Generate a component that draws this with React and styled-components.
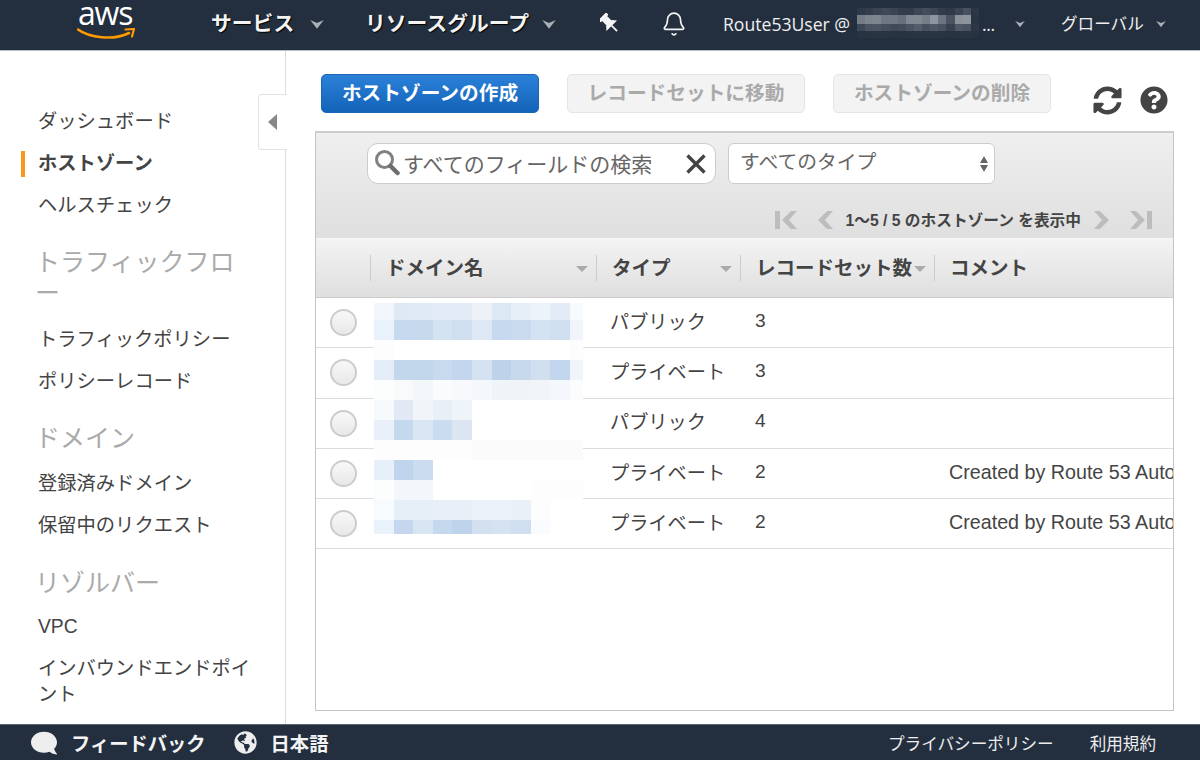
import React from 'react'
import styled, { createGlobalStyle } from 'styled-components'
import { Bell } from 'lucide-react'
import { FaSyncAlt, FaQuestionCircle, FaComment, FaGlobeAmericas } from 'react-icons/fa'

const Global = createGlobalStyle`
  html, body { margin: 0; padding: 0; }
  body { font-family: "Liberation Sans", "Noto Sans CJK JP", sans-serif; background: #fff; color: #444; }
  * { box-sizing: border-box; }
`

const Page = styled.div`
  width: 1200px;
  height: 760px;
  display: flex;
  flex-direction: column;
  overflow: hidden;
`

/* top bar */
const TopBar = styled.header`
  height: 51px;
  flex: none;
  display: flex;
  align-items: center;
  background: #232f3e;
  border-bottom: 1px solid #b9bec4;
  color: #fff;
  padding-bottom: 3px;
`
const Logo = styled.div`
  width: 134px;
  margin-left: 77px;
  flex: none;
  position: relative;
  height: 44px;
`
const LogoText = styled.span`
  position: absolute;
  left: 1px;
  top: -1px;
  font: 400 32px/24px "Open Sans", sans-serif;
  letter-spacing: -1.2px;
  color: #fff;
`
const LogoSmile = styled.svg`
  position: absolute;
  left: 0;
  top: 26px;
`
const NavLabel = styled.span`
  flex: none;
  width: ${p => p.$w}px;
  margin-bottom: 4px;
  font-size: 20.8px;
  font-weight: 700;
  color: #f4f4f4;
  text-shadow: 1px 1px 1px #000;
  white-space: nowrap;
`
const Caret = styled.svg`
  flex: none;
  margin-left: ${p => p.$ml}px;
  margin-right: ${p => p.$mr}px;
  margin-top: 2px;
  fill: #aab0b7;
`
const PinSlot = styled.span`
  flex: none;
  width: 61px;
  margin-left: -3px;
  display: flex;
  color: #f5f5f5;
`
const BellSlot = styled.span`
  flex: none;
  width: 62px;
  display: flex;
  color: #f5f5f5;
`
const UserLabel = styled.span`
  flex: none;
  width: 292px;
  position: relative;
  font: 400 17.6px "Open Sans", "Noto Sans CJK JP", sans-serif;
  color: #f0f0f0;
  white-space: nowrap;
`
const UserDots = styled.span`
  position: absolute;
  left: 259px;
  top: 0;
  letter-spacing: -0.4px;
`
const GlobalLabel = styled.span`
  flex: none;
  width: 95px;
  margin-bottom: 2px;
  font-size: 16.6px;
  color: #f0f0f0;
  white-space: nowrap;
`

/* pixelated masks */
const Mosaic = styled.div`
  position: absolute;
  left: ${p => p.$x}px;
  top: ${p => p.$y}px;
  display: grid;
  grid-template-columns: ${p => p.$cols};
  grid-template-rows: ${p => p.$rows};
`
const MosaicCell = styled.span`
  background: ${p => p.$c};
`

/* body */
const Body = styled.div`
  flex: 1;
  min-height: 0;
  display: flex;
  position: relative;
`
const Sidebar = styled.nav`
  width: 286px;
  flex: none;
  border-right: 1px solid #ddd;
  padding-top: 58px;
  overflow: hidden;
`
const NavItem = styled.div`
  margin: 0 0 ${p => p.$mb ?? 16}px 21px;
  padding-left: 13px;
  border-left: 4px solid ${p => (p.$active ? '#f7981d' : 'transparent')};
  font-size: 19.3px;
  line-height: 26px;
  font-weight: ${p => (p.$active ? 700 : 400)};
  color: #444;
`
const NavHeading = styled.div`
  margin: ${p => p.$mt}px 0 ${p => p.$mb}px 35px;
  font-size: 25px;
  line-height: 31px;
  color: #aaa;
`
const CollapseTab = styled.div`
  position: absolute;
  left: 258px;
  top: 43px;
  width: 29px;
  height: 56px;
  background: #fff;
  border: 1px solid #e2e2e2;
  border-right: none;
  border-radius: 4px 0 0 4px;
  display: flex;
  align-items: center;
  justify-content: center;
  padding-right: 2px;
  &::after {
    content: '';
    border-top: 8px solid transparent;
    border-bottom: 8px solid transparent;
    border-right: 9px solid #888;
  }
`
const Main = styled.main`
  flex: 1;
  min-width: 0;
  padding: 23px 26px 13px 29px;
  display: flex;
  flex-direction: column;
`
const ButtonRow = styled.div`
  display: flex;
  align-items: center;
  height: 39px;
  margin-left: 6px;
  margin-bottom: 18px;
`
const ActionButton = styled.button`
  flex: none;
  width: ${p => p.$w}px;
  height: 39px;
  margin-right: 28px;
  padding: 0 0 4px;
  border-radius: 5px;
  font: 700 19.7px "Liberation Sans", "Noto Sans CJK JP", sans-serif;
  border: 1px solid ${p => (p.$primary ? '#1a66b5' : '#e4e4e4')};
  color: ${p => (p.$primary ? '#fff' : '#aaa')};
  background: ${p => (p.$primary ? 'linear-gradient(#2b80d8, #1264b8)' : '#f3f3f3')};
`
const ToolIcons = styled.div`
  display: flex;
  align-items: center;
  gap: 18px;
  margin-left: 14px;
  margin-top: 13px;
  color: #444;
`

/* table panel */
const Panel = styled.section`
  flex: 1;
  min-height: 0;
  position: relative;
  border: 1px solid #c4c4c4;
  border-top: 2px solid #ccc;
  overflow: hidden;
  background: #fff;
`
const Toolbar = styled.div`
  height: 106px;
  background: linear-gradient(#efefef, #dfdfdf);
  border-bottom: 1px solid #f8f8f8;
  padding: 10px 0 0 51px;
`
const Filters = styled.div`
  display: flex;
  gap: 12px;
`
const SearchBox = styled.div`
  width: 349px;
  height: 41px;
  border: 1px solid #ccc;
  border-radius: 11px;
  background: #fff;
  display: flex;
  align-items: center;
  padding: 0 8px 0 6px;
  font-size: 21px;
  color: #666;
`
const SearchGlyph = styled.svg`
  flex: none;
  margin-top: -2px;
`
const SearchText = styled.span`
  flex: 1;
  margin-left: 3px;
  padding-bottom: 2px;
  white-space: nowrap;
`
const SelectBox = styled.div`
  width: 267px;
  height: 41px;
  border: 1px solid #ccc;
  border-radius: 6px;
  background: #fff;
  display: flex;
  align-items: center;
  justify-content: space-between;
  padding: 0 6px 7px 11px;
  font-size: 19.8px;
  color: #666;
`
const SelectArrows = styled.span`
  display: flex;
  flex-direction: column;
  gap: 2px;
  margin-top: 7px;
  &::before, &::after {
    content: '';
    width: 0;
    border-left: 4px solid transparent;
    border-right: 4px solid transparent;
  }
  &::before { border-bottom: 7px solid #666; }
  &::after { border-top: 7px solid #666; }
`
const Pager = styled.div`
  display: flex;
  align-items: center;
  justify-content: flex-end;
  margin-top: 24px;
  padding-right: 21px;
  gap: 13px;
  font-size: 15.7px;
  font-weight: 700;
  color: #444;
  white-space: nowrap;
`
const PagerGroup = styled.span`
  display: flex;
  align-items: center;
  gap: 21px;
`
const PagerGlyph = styled.svg`
  flex: none;
  fill: #bdbdbd;
  transform: ${p => (p.$flip ? 'scaleX(-1)' : 'none')};
`
const HeadRow = styled.div`
  height: 59px;
  display: grid;
  grid-template-columns: 54px 226px 144px 194px 1fr;
  align-items: center;
  background: linear-gradient(#f3f3f3, #dfdfdf);
  border-bottom: 1px solid #ccc;
`
const HeadCell = styled.div`
  position: relative;
  height: 26px;
  padding-left: 15px;
  font-size: 19.5px;
  line-height: 26px;
  font-weight: 700;
  color: #444;
  border-left: 1px solid #ccc;
  white-space: nowrap;
  &::after {
    content: ${p => (p.$sort ? "''" : 'none')};
    position: absolute;
    right: 8px;
    top: 11px;
    border-left: 6px solid transparent;
    border-right: 6px solid transparent;
    border-top: 6px solid #aaa;
  }
`
const Row = styled.div`
  height: 50.3px;
  display: grid;
  grid-template-columns: 54px 226px 144px 194px 1fr;
  align-items: center;
  border-bottom: 1px solid #ddd;
  font-size: 19.2px;
  color: #444;
  white-space: nowrap;
`
const RadioCell = styled.div`
  display: flex;
  padding-left: 14px;
`
const Radio = styled.span`
  width: 27px;
  height: 27px;
  border-radius: 50%;
  border: 2px solid #ccc;
  background: linear-gradient(#f8f8f8, #e8e8e8);
`
const Cell = styled.div`
  padding-left: ${p => p.$pl}px;
  padding-bottom: 4px;
  overflow: hidden;
`
const CommentCell = styled(Cell)`
  font-size: 19.7px;
  padding-bottom: 2px;
`

/* footer */
const Footer = styled.footer`
  height: 36px;
  flex: none;
  display: flex;
  align-items: center;
  background: #232f3e;
  border-top: 1px solid #5b6570;
  color: #fff;
  padding-right: 44px;
`
const FootStrong = styled.span`
  font-size: 19.3px;
  font-weight: 700;
  margin-left: ${p => p.$ml}px;
  color: #f4f4f4;
`
const FootIcon = styled.span`
  display: flex;
  margin-left: ${p => p.$ml}px;
  color: #eee;
  transform: ${p => (p.$flip ? 'scaleX(-1)' : 'none')};
`
const FootLink = styled.span`
  font-size: 16.6px;
  color: #eee;
  margin-left: ${p => p.$ml};
`

const userMask = [
  ['#2f3a49', '#333e4d', '#3a4553', '#3f4a58', '#3a4553', '#333e4d', '#323d4c', '#3c4755', '#434d5b', '#3c4755', '#323d4c', '#2f3a49', '#3a4553', '#48525f', '#2c3746'],
  ['#747c87', '#7b838d', '#7d858f', '#6d7681', '#6f7782', '#666f7b', '#7f8791', '#80888f', '#757d88', '#8f959e', '#6a737f', '#4a5461', '#8a9199', '#8d949c', '#2a3543'],
  ['#3c4755', '#4a5461', '#4c5663', '#444e5c', '#3f4a58', '#414c59', '#4a5461', '#545d69', '#46505e', '#4e5865', '#48525f', '#36414f', '#4e5865', '#4a5461', '#2c3746'],
  ['#283341', '#293442', '#2a3543', '#293442', '#283341', '#283341', '#293442', '#2a3543', '#293442', '#2a3543', '#293442', '#283341', '#293442', '#2a3543', '#283341']
]

const W = '#ffffff'
const rowMask = [
  ['#f2f6fb', '#dfe9f4', '#e0eaf5', '#e3ecf6', '#e2ebf6', '#edf2f9', '#dce8f4', '#e6eff7', '#edf3fa', '#e2ebf6', '#f8fbfe'],
  ['#e9f1fa', '#c6d9ee', '#c7daed', '#d4e3f2', '#cfdfef', '#dde8f4', '#c7d9ee', '#cbdbef', '#d4e2f2', '#cfdfef', '#f1f5fb'],
  ['#fdfdfd', W, W, W, W, W, W, W, W, W, '#fdfdfd'],
  ['#e3ecf7', '#c2d6ec', '#c2d6ec', '#c8daee', '#c3d6ed', '#d4e2f1', '#bcd3ea', '#c7d9ed', '#d1dfee', '#c2d7ed', '#f0f5fb'],
  ['#fcfdfd', '#f9fafc', '#f4f7fa', '#fafbfd', '#f7f9fc', '#f4f7fb', '#eff4f9', '#f0f4f9', '#f1f5fa', '#f4f7fb', '#fbfcfd'],
  ['#f7fafd', '#e3e9f4', '#f1f5f9', '#e9eff6', '#eff3fa', W, W, W, W, W, W],
  ['#e9f0f9', '#c4d8ee', '#d9e6f3', '#c9dcf0', '#dbe6f2', W, W, W, W, W, W],
  ['#fdfdfd', '#fdfdfd', '#fdfdfd', '#fdfdfd', '#fdfdfd', '#fbfbfb', '#fbfbfb', '#fbfbfb', '#fbfbfb', '#fbfbfb', '#fbfbfb'],
  ['#e7f0f9', '#bed5ec', '#cbdcef', W, W, W, W, W, W, W, W],
  ['#fcfdfd', '#f3f6fb', '#f3f7fb', W, W, W, W, W, '#fdfdfd', '#fdfdfd', '#fdfdfd'],
  ['#f8fbfe', '#e6eef7', '#e6eef7', '#e8eff8', '#e8eff8', '#ebf1f9', '#ebf1f9', '#e9f0f8', '#fdfdfe', W, W],
  ['#e9f1fa', '#c4d7ee', '#d8e5f3', '#c5d8ee', '#bed3ec', '#d2e0f0', '#d4e2f2', '#cfdff0', '#fafbfe', W, W]
]

const zones = [
  { type: 'パブリック', count: 3, comment: '' },
  { type: 'プライベート', count: 3, comment: '' },
  { type: 'パブリック', count: 4, comment: '' },
  { type: 'プライベート', count: 2, comment: 'Created by Route 53 Auto Naming' },
  { type: 'プライベート', count: 2, comment: 'Created by Route 53 Auto Naming' }
]

const PinIcon = () => (
  <svg width="20" height="22" viewBox="0 0 20 22" fill="currentColor">
    <g transform="rotate(-45 10 11)">
      <rect x="4.5" y="0" width="11" height="3.4" rx="1" />
      <rect x="6.5" y="3" width="7" height="7" />
      <path d="M6 9.5h8l3.5 4h-15z" />
      <rect x="9.1" y="13" width="1.8" height="8" />
    </g>
  </svg>
)

const NavCaret = ({ ml, mr, size = 14 }) => (
  <Caret $ml={ml} $mr={mr} width={size} height={size * 0.62} viewBox="0 0 14 9">
    <path d="M0 0l7 3 7-3-7 9z" />
  </Caret>
)

const SearchIcon = () => (
  <SearchGlyph width="26" height="28" viewBox="0 0 26 28" fill="none">
    <circle cx="10.5" cy="10.5" r="8" stroke="#808080" strokeWidth="3" />
    <path d="M16.5 17l7 7" stroke="#6e6e6e" strokeWidth="4.5" strokeLinecap="round" />
  </SearchGlyph>
)

const ClearIcon = () => (
  <svg width="22" height="22" viewBox="0 0 22 22" fill="none">
    <path d="M2.5 2.5l17 17M19.5 2.5l-17 17" stroke="#444" strokeWidth="3.4" />
  </svg>
)

const PagerIcon = ({ flip, bar }) => (
  <PagerGlyph $flip={flip} width={bar ? 22 : 15} height="20" viewBox={bar ? '0 0 22 20' : '7 0 15 20'}>
    {bar && <rect x="0" y="1" width="5" height="18" />}
    <path d="M16 1h6l-8 9 8 9h-6l-9-9z" />
  </PagerGlyph>
)

export default function App() {
  return (
    <Page>
      <Global />
      <TopBar>
        <Logo>
          <LogoText>aws</LogoText>
          <LogoSmile width="58" height="13" viewBox="0 0 58 13" fill="none">
            <path d="M1 1.5C12 9.5 36 13 52 5" stroke="#f90" strokeWidth="2.6" strokeLinecap="round" />
            <path d="M48.5 1.5L57 1l-2 7.5" stroke="#f90" strokeWidth="2.2" strokeLinecap="round" />
          </LogoSmile>
        </Logo>
        <NavLabel $w={86}>サービス</NavLabel>
        <NavCaret ml={13} mr={41} />
        <NavLabel $w={165}>リソースグループ</NavLabel>
        <NavCaret ml={12} mr={47} />
        <PinSlot><PinIcon /></PinSlot>
        <BellSlot><Bell size={26} strokeWidth={1.5} /></BellSlot>
        <UserLabel>
          Route53User @
          <UserDots>...</UserDots>
          <Mosaic $x={134} $y={-4} $cols="repeat(15, 8.13px)" $rows="7px 9px 7px 7px">
            {userMask.flat().map((c, i) => <MosaicCell key={i} $c={c} />)}
          </Mosaic>
        </UserLabel>
        <NavCaret ml={0} mr={36} size={10} />
        <GlobalLabel>グローバル</GlobalLabel>
        <NavCaret ml={0} mr={0} size={10} />
      </TopBar>

      <Body>
        <Sidebar>
          <NavItem>ダッシュボード</NavItem>
          <NavItem $active>ホストゾーン</NavItem>
          <NavItem>ヘルスチェック</NavItem>
          <NavHeading $mt={28} $mb={18}>トラフィックフロ<br />ー</NavHeading>
          <NavItem>トラフィックポリシー</NavItem>
          <NavItem>ポリシーレコード</NavItem>
          <NavHeading $mt={28} $mb={17}>ドメイン</NavHeading>
          <NavItem>登録済みドメイン</NavItem>
          <NavItem>保留中のリクエスト</NavItem>
          <NavHeading $mt={29} $mb={15}>リゾルバー</NavHeading>
          <NavItem $mb={16}>VPC</NavItem>
          <NavItem $mb={0}>インバウンドエンドポイ<br />ント</NavItem>
        </Sidebar>
        <CollapseTab />

        <Main>
          <ButtonRow>
            <ActionButton $primary $w={218}>ホストゾーンの作成</ActionButton>
            <ActionButton $w={238}>レコードセットに移動</ActionButton>
            <ActionButton $w={218}>ホストゾーンの削除</ActionButton>
            <ToolIcons>
              <FaSyncAlt size={29} />
              <FaQuestionCircle size={28} />
            </ToolIcons>
          </ButtonRow>

          <Panel>
            <Toolbar>
              <Filters>
                <SearchBox>
                  <SearchIcon />
                  <SearchText>すべてのフィールドの検索</SearchText>
                  <ClearIcon />
                </SearchBox>
                <SelectBox>
                  すべてのタイプ
                  <SelectArrows />
                </SelectBox>
              </Filters>
              <Pager>
                <PagerGroup>
                  <PagerIcon bar />
                  <PagerIcon />
                </PagerGroup>
                <span>1〜5 / 5 のホストゾーン を表示中</span>
                <PagerGroup>
                  <PagerIcon flip />
                  <PagerIcon flip bar />
                </PagerGroup>
              </Pager>
            </Toolbar>
            <HeadRow>
              <span />
              <HeadCell $sort>ドメイン名</HeadCell>
              <HeadCell $sort>タイプ</HeadCell>
              <HeadCell $sort>レコードセット数</HeadCell>
              <HeadCell>コメント</HeadCell>
            </HeadRow>
            {zones.map((z, i) => (
              <Row key={i}>
                <RadioCell><Radio /></RadioCell>
                <Cell />
                <Cell $pl={14}>{z.type}</Cell>
                <Cell $pl={15}>{z.count}</Cell>
                <CommentCell $pl={15}>{z.comment}</CommentCell>
              </Row>
            ))}
            <Mosaic $x={58} $y={170} $cols="repeat(10, 19.6px) 13px" $rows="17px repeat(10, 20px) 14px">
              {rowMask.flat().map((c, i) => <MosaicCell key={i} $c={c} />)}
            </Mosaic>
          </Panel>
        </Main>
      </Body>

      <Footer>
        <FootIcon $ml={31} $flip><FaComment size={26} /></FootIcon>
        <FootStrong $ml={14}>フィードバック</FootStrong>
        <FootIcon $ml={28}><FaGlobeAmericas size={23} /></FootIcon>
        <FootStrong $ml={14}>日本語</FootStrong>
        <FootLink $ml="auto">プライバシーポリシー</FootLink>
        <FootLink $ml="36px">利用規約</FootLink>
      </Footer>
    </Page>
  )
}
